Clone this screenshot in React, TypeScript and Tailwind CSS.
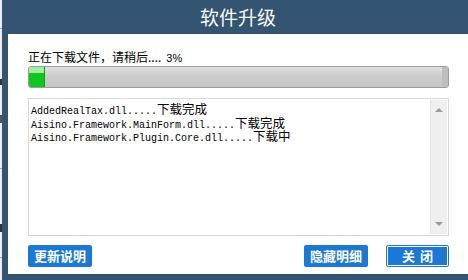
import React from 'react';

const cjk = '"Noto Sans CJK SC", "Noto Sans", sans-serif';

const files = [
  { name: 'AddedRealTax.dll.....', status: '下载完成' },
  { name: 'Aisino.Framework.MainForm.dll.....', status: '下载完成' },
  { name: 'Aisino.Framework.Plugin.Core.dll.....', status: '下载中' },
];

function ScrollBar() {
  return (
    <div className="flex w-[17px] flex-col items-center justify-between border-l border-[#e2e2e2] bg-[#efefef] py-[7px]">
      <svg width="8" height="5" viewBox="0 0 8 5">
        <path d="M0 5 L4 1 L8 5 Z" fill="#9a9a9a" />
      </svg>
      <svg width="8" height="5" viewBox="0 0 8 5">
        <path d="M0 0 L8 0 L4 4 Z" fill="#9a9a9a" />
      </svg>
    </div>
  );
}

export default function App() {
  return (
    <div className="flex h-[280px] w-[468px] overflow-hidden bg-white" style={{ fontFamily: cjk }}>
      {/* window behind the dialog */}
      <div className="flex w-[2px] flex-col bg-[#ececec]">
        <div className="mt-[28px] h-px bg-[#a8a8a8]" />
        <div className="mt-[50px] h-[6px] bg-[#333]" />
        <div className="mt-[30px] h-[8px] bg-[#555]" />
        <div className="mt-[45px] h-px bg-[#a8a8a8]" />
        <div className="mt-[55px] h-[8px] bg-[#333]" />
        <div className="mt-[25px] h-px bg-[#a8a8a8]" />
      </div>

      <div className="flex flex-1 flex-col bg-[#345572] pb-[6px] pl-[6px]">
        <div className="flex h-[34px] items-center justify-center text-[19px] text-white">
          软件升级
        </div>

        <div className="flex flex-1 flex-col bg-white pl-[20px] pr-[19px] pt-[16px]">
          <div className="flex items-baseline text-[12px] leading-[14px] text-black">
            <span>正在下载文件，请稍后....</span>
            <span className="ml-[5px] text-[11px]" style={{ fontFamily: '"Liberation Sans", sans-serif' }}>3%</span>
          </div>

          {/* progress bar */}
          <div className="mt-[1px] flex h-[22px] overflow-hidden rounded-[3px] border border-[#9c9c9c] bg-gradient-to-b from-[#e0e0e0] via-[#cbcbcb] to-[#c6c6c6]">
            <div className="flex w-[16px] flex-col border-r border-[#0a9c1a]">
              <div className="h-[6px] bg-[#9ef0a0]" />
              <div className="flex-1 bg-[#11c623]" />
            </div>
            <div className="flex-1" />
            <div className="w-[6px] bg-[#bdbdbd]" />
          </div>

          {/* detail list */}
          <div className="mt-[10px] flex h-[138px] border border-[#d9d9d9] bg-white">
            <div
              className="flex-1 pl-[2px] pt-[5px] text-[10px] leading-[10.5px] text-black"
              style={{ fontFamily: '"Liberation Mono", monospace' }}
            >
              {files.map((f) => (
                <div key={f.name} className="whitespace-nowrap">
                  {f.name}
                  <span className="text-[12.5px]" style={{ fontFamily: cjk }}>{f.status}</span>
                </div>
              ))}
            </div>
            <div className="flex py-px pr-px">
              <ScrollBar />
            </div>
          </div>

          <div className="mt-[9px] flex h-[22px] items-stretch">
            <button className="flex w-[64px] items-center justify-center rounded-[2px] bg-[#1b79d5] text-[13px] font-bold text-white">
              更新说明
            </button>
            <div className="flex-1" />
            <button className="flex w-[64px] items-center justify-center rounded-[2px] bg-[#1b79d5] text-[13px] font-bold text-white">
              隐藏明细
            </button>
            <button className="ml-[18px] flex w-[63px] rounded-[2px] border border-[#1b79d5] bg-white p-px">
              <div className="flex flex-1 items-center justify-center gap-[5px] bg-[#1b79d5] text-[13px] font-bold text-white">
                <span>关</span>
                <span>闭</span>
              </div>
            </button>
          </div>
        </div>
      </div>
    </div>
  );
}
